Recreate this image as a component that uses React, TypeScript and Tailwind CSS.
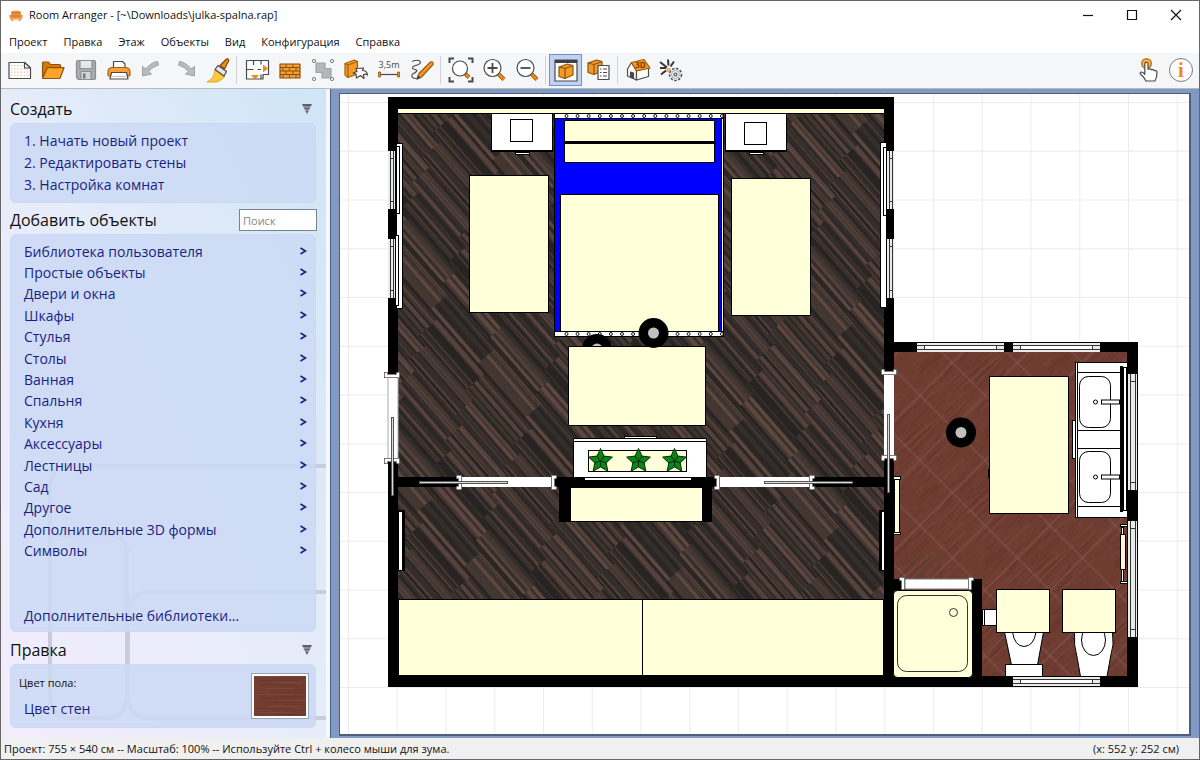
import type { ReactNode } from "react";

const MENU = ["Проект", "Правка", "Этаж", "Объекты", "Вид", "Конфигурация", "Справка"];

const STEPS = ["1. Начать новый проект", "2. Редактировать стены", "3. Настройка комнат"];

const CATEGORIES = [
  "Библиотека пользователя",
  "Простые объекты",
  "Двери и окна",
  "Шкафы",
  "Стулья",
  "Столы",
  "Ванная",
  "Спальня",
  "Кухня",
  "Аксессуары",
  "Лестницы",
  "Сад",
  "Другое",
  "Дополнительные 3D формы",
  "Символы",
];

const ORANGE = "#f08c14";
const INK = "#4a4a4a";
const CREAM = "#ffffd9";

/* ---------- toolbar icons ---------- */

function Icon({ children }: { children: ReactNode }) {
  return (
    <svg viewBox="0 0 26 26" className="size-[26px]" fill="none" stroke={INK} strokeWidth="1.2" strokeLinejoin="round" aria-hidden="true">
      {children}
    </svg>
  );
}

const dots = Array.from({ length: 24 }, (_, i) => ({ x: 4 + (i % 6) * 3.2, y: 8 + Math.floor(i / 6) * 3.3 }));

const NewIcon = (
  <Icon>
    <path d="M2 5.500h15.500l6 5.500v10.500H2z" fill="#fff" />
    {dots.map((d, i) => (
      <rect key={i} x={d.x} y={d.y} width="1.2" height="1.2" fill="#f3b487" stroke="none" />
    ))}
    <path d="M17.500 5.500v5.500h6z" fill="#fff" />
  </Icon>
);

const OpenIcon = (
  <Icon>
    <path d="M2.500 20V6q0-1 1-1h5l2 2.500h9q1 0 1 1V11" fill="#d87808" stroke="#8b5210" />
    <path d="M2.500 21.500 7 11.500q.3-.8 1.200-.8H24L20.300 20.500q-.4 1-1.400 1z" fill="#ffa32b" stroke="#8b5210" />
  </Icon>
);

const SaveIcon = (
  <Icon>
    <path d="M5 3.500h16q1.500 0 1.500 1.500v16q0 1.500-1.500 1.500H5.500L3.500 20.500V5q0-1.500 1.500-1.500z" fill="#a9abad" stroke="#8a8c8f" />
    <path d="M7 3.500h12v8H7z" fill="#e6e7e8" stroke="#8f9193" />
    <path d="M8 14.500h10v8H8z" fill="#d5d6d8" stroke="#8f9193" />
    <path d="M10 16.500h2.500v5H10z" fill="#77797c" stroke="none" />
  </Icon>
);

const PrintIcon = (
  <Icon>
    <path d="M7.500 12V4.500h9l2.500 2.500v5" fill="#fff" />
    <path d="M5.500 10.500h15q3.500 1 3.500 4.500v3q0 1-1 1H3q-1 0-1-1v-3q0-3.500 3.500-4.500z" fill="#f6a03a" stroke="#a85f0c" />
    <path d="M5.500 15.500h15l1.500 6.500H4z" fill="#fff" />
    <path d="M6.500 19.500h13" stroke="#c5c5c5" />
  </Icon>
);

const UndoIcon = (
  <Icon>
    <path d="M3.500 9.500V19l9-2-3-2.500q3.500-4.500 10-6.500l-1-3.500Q11.500 5.500 7 12z" fill="#b9bbbd" stroke="#9fa1a3" strokeWidth="1" />
  </Icon>
);

const RedoIcon = (
  <Icon>
    <path d="M22.500 9.500V19l-9-2 3-2.500q-3.500-4.500-10-6.500l1-3.500Q14.500 5.500 19 12z" fill="#b9bbbd" stroke="#9fa1a3" strokeWidth="1" />
  </Icon>
);

const BrushIcon = (
  <Icon>
    <path d="M2 25q7-3 8-12l10 6.500q-4 4-8 5.500z" fill="#ffc93c" stroke="#d99b16" strokeWidth=".8" />
    <path d="m10 12.500 3-4 8.500 6-2.500 4.500z" fill="#e4e6ea" />
    <path d="m15 8.500 5.500-5.500q2-2.200 3.200-.2.300 1.500-1.200 3.200L19.500 12z" fill={ORANGE} stroke="#7d4a10" />
  </Icon>
);

const PlanIcon = (
  <Icon>
    <path d="M2.500 3.500h22v14h-5.500v4.500H2.500z" fill="#fff" />
    <path d="M2.500 12.500h7m4 0h3.500m0-9v4m-7.500-4V8m7.500 9.500v4.500" />
    <path d="M7 18h8l-4 4.500z" fill={ORANGE} stroke="none" />
    <path d="M19 7.500v8l5-4z" fill={ORANGE} stroke="none" />
  </Icon>
);

const WallIcon = (
  <Icon>
    <rect x="3" y="7" width="20" height="14" fill="#f5a033" stroke="#8b4e0c" />
    <path d="M3 10.500h20M3 14h20M3 17.500h20M9 7v3.500M16 7v3.500M6 10.500V14M12.500 10.500V14M19 10.500V14M9 14v3.500M16 14v3.500M6 17.500V21M12.500 17.500V21M19 17.500V21" stroke="#8b4e0c" strokeWidth="1" />
  </Icon>
);

const GroupIcon = (
  <Icon>
    <path d="M6 6h9v5.500h6V21h-9v-5.500H6z" fill="#b5b7b9" stroke="#a0a2a4" />
    {[[4, 4], [22, 4], [4, 22], [22, 22]].map(([cx, cy]) => (
      <circle key={`${cx}-${cy}`} cx={cx} cy={cy} r="1.6" fill="#fff" stroke="#77797c" strokeWidth="1" />
    ))}
  </Icon>
);

const MoveIcon = (
  <Icon>
    <path d="M2 6.500 11.500 3l3 1.500V17L5 20.500 2 18z" fill="#f59a25" stroke="#a4600e" />
    <path d="M2 6.500 5 8l9.500-3.500M5 8v12.500" stroke="#a4600e" />
    <path d="m13 11.500 7.500-.5-1 2.500q4.500 0 5 4.500-2-1.500-4-.5l.5 4-3.500-3-4 2.500-.5-4-3-1 4-1.500z" fill="#fff" />
  </Icon>
);

const MeasureIcon = (
  <Icon>
    <text x="13" y="11" textAnchor="middle" fontSize="9" fill={INK} stroke="none" className="font-['Open_Sans',sans-serif]">
      3,5m
    </text>
    <path d="M4 17.500h19" />
    <path d="M2.500 15h2v5h-2zM21.500 15h2v5h-2z" fill={ORANGE} stroke="#8b5a1a" strokeWidth=".8" />
  </Icon>
);

const PencilIcon = (
  <Icon>
    <path d="M3 4.500q6-2.500 8 0T5 9q-3.500 2.500 1 3.500t-2.500 4.500q-2.500 4.500 4 4.500" />
    <path d="m8 22 2-5.500L21.500 5q3-.8 2.500 2.500L12.500 20z" fill="#f59a25" stroke="#9b5a0e" />
    <path d="m8 22 1.200-3 1.800 1.800z" fill={INK} />
  </Icon>
);

const FitIcon = (
  <Icon>
    <path d="M1.500 6V1.500H6M20 1.500h4.500V6M1.500 20v4.500H6M20 24.500h4.500V20" strokeWidth="2" strokeLinejoin="miter" />
    <circle cx="12" cy="11.500" r="7.500" fill="#fff" />
    <path d="m17.500 17 3.500 3.500" stroke="#9b5a0e" strokeWidth="4" />
    <path d="m18 17.500 3 3" stroke={ORANGE} strokeWidth="2.400" />
  </Icon>
);

function ZoomIcon({ plus }: { plus?: boolean }) {
  return (
    <Icon>
      <circle cx="11.500" cy="11" r="8.500" fill="#fff" />
      <path d={plus ? "M6.500 11h10M11.500 6v10" : "M6.500 11h10"} strokeWidth="1.800" />
      <path d="m17.500 17 5.500 5.500" stroke="#9b5a0e" strokeWidth="4" />
      <path d="m18 17.500 5 5" stroke={ORANGE} strokeWidth="2.400" />
    </Icon>
  );
}

const box = (
  <>
    <path d="m6 10 8.500-3 5.500 1.500v9.500L12 21.500 6 19.500z" fill="#f59a25" stroke="#8b5210" />
    <path d="m6 10 6 1.500 8-3M12 11.500v10" stroke="#8b5210" />
  </>
);

const ObjectWindowIcon = (
  <Icon>
    <rect x="2" y="3" width="22" height="21" fill="#fff" />
    <path d="M2 4.500h22" strokeWidth="3" stroke="#3c3f48" />
    {box}
  </Icon>
);

const ObjectListIcon = (
  <Icon>
    <g transform="translate(-4 -4)">{box}</g>
    <path d="M12 8.500h11v14H12z" fill="#fff" />
    <path d="M14 12h1.500m1.500 0h4M14 15.500h1.500m1.500 0h4M14 19h1.500m1.500 0h4" strokeWidth="1" />
  </Icon>
);

const HouseIcon = (
  <Icon>
    <path d="m2.500 12 4-6.500 5 8v9.500l-9-4z" fill="#fff" />
    <path d="m11.500 13.500 12-2.500v8.500l-12 3.500z" fill="#fff" />
    <path d="m6.500 5.500 12.500-3L25 11l-13.500 3z" fill="#f59a25" stroke="#9b5a0e" />
    <path d="M5.500 20v-5l3 1v5.300z" fill={INK} />
    <text x="15.500" y="11" textAnchor="middle" fontSize="8" fontWeight="bold" fill="#7c3a00" stroke="none" className="font-['Open_Sans',sans-serif]">
      3D
    </text>
  </Icon>
);

const RenderIcon = (
  <Icon>
    <path d="m2 5 7 5.500M10 2.500l.5 6M16 4.500l-3.500 5M2 11h6M3 17.500l5-4" stroke="#35363a" strokeWidth="2" />
    <circle cx="17.500" cy="17.500" r="6" strokeDasharray="2.500 1.500" strokeWidth="1.500" />
    <circle cx="17.500" cy="17.500" r="4" stroke="#8a8a8a" strokeWidth=".8" />
    <circle cx="17.500" cy="17.500" r="1.500" />
    <circle cx="10.500" cy="13" r="1.800" fill="#f3c084" stroke="#c98a3c" strokeWidth=".8" />
  </Icon>
);

const TouchIcon = (
  <Icon>
    <circle cx="11.500" cy="6.500" r="4.800" fill="#f9b14f" stroke="#c9781a" strokeWidth="1.500" />
    <path d="M9.800 15V6.800q0-1.500 1.600-1.500T13 6.800v5.400q2.800-1 3.300.6 2.500-.8 3 .9 2.700-.5 2.700 1.500-.1 5.500-2 8.800h-9q-1.500-3.500-5.500-7-1-1.800 1-2 1.800.2 3.300 2.500z" fill="#fff" />
  </Icon>
);

const InfoIcon = (
  <Icon>
    <circle cx="13" cy="13" r="11.500" fill="#fdfdfd" stroke="#7b7b7b" strokeWidth="1" />
    <text x="13" y="19.500" textAnchor="middle" fontSize="21" fontWeight="bold" fill={ORANGE} stroke="none" className="font-['Liberation_Serif',serif]">
      i
    </text>
  </Icon>
);

type Tool = { label: string; icon: ReactNode; active?: boolean };

const TOOL_GROUPS: Tool[][] = [
  [
    { label: "Новый", icon: NewIcon },
    { label: "Открыть", icon: OpenIcon },
    { label: "Сохранить", icon: SaveIcon },
    { label: "Печать", icon: PrintIcon },
    { label: "Отменить", icon: UndoIcon },
    { label: "Повторить", icon: RedoIcon },
    { label: "Кисть", icon: BrushIcon },
  ],
  [
    { label: "План", icon: PlanIcon },
    { label: "Стены", icon: WallIcon },
    { label: "Группа", icon: GroupIcon },
    { label: "Переместить", icon: MoveIcon },
    { label: "Размер", icon: MeasureIcon },
    { label: "Рисовать", icon: PencilIcon },
  ],
  [
    { label: "Показать всё", icon: FitIcon },
    { label: "Увеличить", icon: <ZoomIcon plus /> },
    { label: "Уменьшить", icon: <ZoomIcon /> },
  ],
  [
    { label: "Окно объекта", icon: ObjectWindowIcon, active: true },
    { label: "Список объектов", icon: ObjectListIcon },
  ],
  [
    { label: "Вид 3D", icon: HouseIcon },
    { label: "Рендер", icon: RenderIcon },
  ],
];

function ToolButton({ tool }: { tool: Tool }) {
  return (
    <button
      type="button"
      aria-label={tool.label}
      className={`flex h-8 w-[33px] items-center justify-center border ${tool.active ? "border-[#6f8fd0] bg-[#c3d1f0]" : "border-transparent"}`}
    >
      {tool.icon}
    </button>
  );
}

/* ---------- floor textures ---------- */

function makeRandom(seed: number) {
  let s = seed;
  return () => {
    s = (s * 1103515245 + 12345) % 2147483648;
    return s / 2147483648;
  };
}

const DARK_TONES = ["#2a2624", "#372e2b", "#443732", "#53403a", "#262322", "#40352f", "#5f4840", "#332d2b"];

const darkStrips = (() => {
  const rnd = makeRandom(7);
  const out: { x: number; y: number; w: number; h: number; fill: string }[] = [];
  // planks of 24 units, each with its own long grain lines
  for (let row = 0; row < 6; row++) {
    for (let col = 0; col < 2; col++) {
      const start = col * 72 + row * 12 - 60;
      for (let y = 0; y < 24; ) {
        const h = 1 + Math.floor(rnd() * 3);
        const fill = DARK_TONES[Math.floor(rnd() * DARK_TONES.length)];
        const w = 72;
        for (const shift of [0, 144]) out.push({ x: start + shift, y: row * 24 + y, w, h, fill });
        y += h;
      }
    }
  }
  return out;
})();

const redStrips = (() => {
  const rnd = makeRandom(23);
  return Array.from({ length: 110 }, () => ({
    x: Math.floor(rnd() * 92),
    y: Math.floor(rnd() * 92) - 10,
    h: 8 + Math.floor(rnd() * 30),
    fill: ["#633429", "#76463a", "#66382c", "#724035"][Math.floor(rnd() * 4)],
  }));
})();

function Textures() {
  return (
    <defs>
      <pattern id="dark" width="144" height="144" patternUnits="userSpaceOnUse" patternTransform="rotate(49)">
        <rect width="144" height="144" fill="#3f342f" />
        {darkStrips.map((s, i) => (
          <rect key={i} x={s.x} y={s.y} width={s.w} height={s.h} fill={s.fill} />
        ))}
      </pattern>
      <pattern id="red" width="92" height="92" patternUnits="userSpaceOnUse" patternTransform="rotate(45)">
        <rect width="92" height="92" fill="#6e3c30" />
        {redStrips.map((s, i) => (
          <rect key={i} x={s.x} y={s.y} width="1" height={s.h} fill={s.fill} />
        ))}
        <path d="M10 0v92M56 0v92M0 43h92M0 89h92" stroke="#a5857a" strokeWidth=".6" opacity=".6" />
      </pattern>
      <pattern id="grid" x="348" y="102" width="48.750" height="48.750" patternUnits="userSpaceOnUse">
        <path d="M.5 0v48.750M0 .5h48.750" stroke="#ececec" />
      </pattern>
    </defs>
  );
}

/* ---------- floor plan ---------- */

type BoxProps = { x: number; y: number; w: number; h: number; fill?: string; r?: number };

function Box({ x, y, w, h, fill = "#fff", r = 0 }: BoxProps) {
  return <rect x={x + 0.5} y={y + 0.5} width={w} height={h} rx={r} fill={fill} stroke="#000" strokeWidth="1" />;
}

function Wall({ x, y, w, h }: BoxProps) {
  return <rect x={x} y={y} width={w} height={h} fill="#000" />;
}

function WindowH({ x, y }: { x: number; y: number }) {
  return (
    <g stroke="#333" strokeWidth="1">
      <rect x={x} y={y} width="87" height="9" fill="#e9eaea" stroke="none" />
      <path d={`M${x} ${y + 2.5}h87M${x} ${y + 6.5}h87M${x + 7.5} ${y + 2}v5M${x + 79.5} ${y + 2}v5`} />
      <path d={`M${x + 8} ${y + 4.5}h71`} stroke="#fff" strokeWidth="3" />
    </g>
  );
}

function WindowV({ x, y, w, h }: BoxProps) {
  return (
    <g stroke="#333" strokeWidth="1">
      <rect x={x} y={y} width={w} height={h} fill="#e9eaea" stroke="none" />
      <path d={`M${x + 2.5} ${y}v${h}M${x + w - 1.5} ${y}v${h}M${x + 2} ${y + 7.5}h${w - 4}M${x + 2} ${y + h - 7.5}h${w - 4}`} />
    </g>
  );
}

// Jamb of a sliding door
function Jamb({ d }: { d: string }) {
  return (
    <>
      <path d={d} fill="none" stroke="#555" strokeWidth="4" strokeLinecap="square" />
      <path d={d} fill="none" stroke="#fff" strokeWidth="2.400" strokeLinecap="square" />
    </>
  );
}

function Slider({ x, y, w, h }: BoxProps) {
  return <rect x={x + 0.5} y={y + 0.5} width={w} height={h} fill="#ddd" stroke="#555" />;
}

function Stool({ x, y }: { x: number; y: number }) {
  return (
    <>
      <circle cx={x} cy={y} r="15" fill="#000" />
      <circle cx={x} cy={y} r="5.500" fill="#c0c0c0" />
    </>
  );
}

function Nightstand({ x, top }: { x: number; top: number }) {
  return (
    <>
      <Box x={x} y={113} w={61} h={38} />
      <path d={`M${x} 150.500h61`} stroke="#000" />
      <Box x={x + 24} y={152} w={14} h={2} />
      <Box x={x + 19} y={top} w={22} h={22} />
    </>
  );
}

function starPoints(cx: number, cy: number) {
  return Array.from({ length: 10 }, (_, i) => {
    const r = i % 2 ? 6 : 12.5;
    const a = (Math.PI / 5) * i - Math.PI / 2;
    return `${(cx + r * Math.cos(a)).toFixed(1)},${(cy + r * Math.sin(a)).toFixed(1)}`;
  });
}

function Plant({ x }: { x: number }) {
  const pts = starPoints(x, 461);
  return (
    <g stroke="#052b08" strokeWidth="1">
      <polygon points={pts.join(" ")} fill="#0a8616" />
      {pts.filter((_, i) => i % 2 === 1).map((p) => (
        <path key={p} d={`M${x} 461L${p}`} />
      ))}
    </g>
  );
}

function Rail({ y }: { y: number }) {
  return (
    <>
      <Box x={554} y={y} w={169} h={5} />
      {Array.from({ length: 15 }, (_, i) => (
        <circle key={i} cx={566.5 + i * 11.1} cy={y + 3} r="1.500" fill="#fff" stroke="#000" strokeWidth=".9" />
      ))}
    </>
  );
}

function Basin({ y }: { y: number }) {
  return (
    <>
      <rect x="1079.500" y={y} width="31" height="51" rx="9" fill="#fff" stroke="#000" />
      <circle cx="1095.500" cy={y + 25.5} r="2" fill="#fff" stroke="#000" />
      <Box x={1101} y={y + 23} w={18} h={4} />
    </>
  );
}

function Bedroom() {
  return (
    <>
      <Wall x={388} y={97} w={506} h={590} />
      <rect x="398" y="113" width="486" height="486" fill="url(#dark)" />
      <rect x="398" y="109" width="486" height="4" fill={CREAM} />
      <path d="M398 113.500h486" stroke="#000" />
      <Box x={398} y={599} w={485} h={76} fill={CREAM} />
      <path d="M642.500 599v77" stroke="#000" />
      <Wall x={398} y={477} w={486} h={10} />

      {/* windows and curtains */}
      <WindowV x={388} y={151} w={7} h={58} />
      <WindowV x={388} y={239} w={7} h={59} />
      <Box x={396} y={143} w={6} h={165} />
      <Box x={396} y={146} w={3} h={67} />
      <Box x={395} y={235} w={3} h={70} />
      <WindowV x={887} y={151} w={7} h={58} />
      <WindowV x={887} y={239} w={7} h={59} />
      <Box x={880} y={142} w={6} h={165} />
      <Box x={883} y={147} w={3} h={68} />
      <Wall x={397} y={510} w={8} h={61} />
      <rect x="399" y="512" width="3" height="58" fill="#fff" />
      <Wall x={879} y={510} w={8} h={61} />
      <rect x="882" y="512" width="3" height="58" fill="#fff" />

      {/* bed */}
      <Box x={554} y={113} w={169} h={222} />
      <rect x="555" y="118" width="167" height="214" fill="#00f" />
      <path d="M721.500 118v214" stroke="#000" />
      <Rail y={113} />
      <Rail y={331} />
      <Box x={564} y={120} w={150} h={42} fill={CREAM} />
      <path d="M564 142.500h152" stroke="#000" strokeWidth="3" />
      <Box x={560} y={194} w={158} h={137} fill={CREAM} />

      <Nightstand x={491} top={119} />
      <Nightstand x={725} top={122} />
      <Box x={469} y={175} w={79} h={137} fill={CREAM} />
      <Box x={731} y={178} w={79} h={137} fill={CREAM} />

      <Stool x={597} y={349} />
      <Box x={568} y={346} w={137} h={79} fill={CREAM} />
      <Stool x={653.5} y={333} />

      {/* cabinet with plants */}
      <Box x={624} y={436} w={32} h={2} />
      <Box x={573} y={438} w={133} h={39} />
      <path d="M573 441.500h133" stroke="#000" />
      <Box x={588} y={450} w={98} h={21} fill={CREAM} />
      <Plant x={600.5} />
      <Plant x={638.5} />
      <Plant x={674.5} />
      <Wall x={554} y={477} w={160} h={10} />
      <rect x="585" y="478" width="106" height="2" fill="#fff" />
      <Box x={570} y={487} w={132} h={34} fill={CREAM} />
      <Wall x={559} y={487} w={11} h={35} />
      <Wall x={702} y={487} w={10} h={35} />

      {/* sliding doors */}
      <rect x="462" y="477" width="90" height="10" fill="#fff" />
      <Jamb d="M458 477h2v11h-2" />
      <Jamb d="M555 477h-2v11h2" />
      <Slider x={419} y={481} w={88} h={2} />
      <rect x="720" y="477" width="90" height="10" fill="#fff" />
      <Jamb d="M716 477h2v11h-2" />
      <Jamb d="M813 477h-2v11h2" />
      <Slider x={764} y={481} w={88} h={2} />
      <rect x="388" y="376" width="10" height="84" fill="#fff" stroke="#aaa" />
      <Jamb d="M386 374v2h12v-2" />
      <Jamb d="M386 462v-2h12v2" />
      <Slider x={391} y={417} w={2} h={78} />
    </>
  );
}

function Bathroom() {
  return (
    <>
      <Wall x={884} y={342} w={254} h={345} />
      <rect x="894" y="352" width="233" height="324" fill="url(#red)" />
      <WindowH x={917} y={343} />
      <WindowH x={1013} y={343} />
      <WindowH x={1013} y={677} />
      <WindowV x={1128} y={374} w={9} h={116} />
      <WindowV x={1128} y={521} w={9} h={116} />

      <rect x="884" y="373" width="10" height="83" fill="#fff" />
      <Jamb d="M883 371v2h12v-2" />
      <Jamb d="M883 459v-2h12v2" />
      <Slider x={887} y={414} w={2} h={78} />

      <Box x={989} y={376} w={79} h={137} fill={CREAM} />
      <Wall x={988} y={469} w={2} h={9} />
      <Stool x={961} y={432.5} />

      {/* vanity */}
      <Box x={1072} y={420} w={3} h={38} />
      <Box x={1075} y={362} w={52} h={155} />
      <path d="M1077.500 363v154M1078 372.500h44M1078 430.500h44M1078 448.500h44M1078 506.500h44" stroke="#000" />
      <Basin y={376.5} />
      <Basin y={451.5} />
      <Box x={1123} y={367} w={3} h={143} />
      <Wall x={1120} y={366} w={3} h={146} />

      {/* towel rail and radiator */}
      <Box x={894} y={478} w={5} h={56} fill={CREAM} />
      <Box x={893} y={476} w={7} h={3} fill={CREAM} />
      <Box x={893} y={532} w={7} h={2} fill={CREAM} />
      <Box x={1120} y={524} w={7} h={2} fill={CREAM} />
      <Box x={1121} y={527} w={2} h={54} fill="#fff" />
      <Box x={1120} y={534} w={5} h={35} fill="#fff5d5" />
      <Box x={1120} y={581} w={7} h={2} fill="#fff" />

      {/* shower */}
      <path d="M906 578l7-24 7 24m2 0l7-24 7 24" fill="none" stroke="#5a4440" />
      <Wall x={894} y={579} w={12} h={12} />
      <Wall x={970} y={579} w={12} h={100} />
      <rect x="905" y="579" width="64" height="10" fill="#fff" stroke="#777" />
      <Jamb d="M901 579h2v9" />
      <Jamb d="M972 579h-2v9" />
      <Box x={893} y={590} w={79} h={87} fill={CREAM} r={4} />
      <rect x="897.500" y="595.500" width="70" height="76" rx="9" fill={CREAM} stroke="#333" />
      <circle cx="953.500" cy="612.500" r="4" fill={CREAM} stroke="#333" />

      {/* toilets */}
      <Box x={982} y={609} w={14} h={16} />
      <path d="M984.500 609v17" stroke="#000" />
      <path d="M1004.500 632l7 33h26l6-33z" fill="#fff" stroke="#000" />
      <path d="M1012.500 632q2 14 11.500 14.500 10-.5 12-14.500" fill="#fff" stroke="#000" />
      <Box x={1005} y={664} w={37} h={12} />
      <path d="M1074.500 632q-1 13 2.500 25l3.500 19.500h26.500l3.500-19.500q4-12 2-25z" fill="#fff" stroke="#000" />
      <ellipse cx="1093.500" cy="640" rx="12" ry="15.500" fill="#fff" stroke="#000" />
      <Box x={996} y={589} w={53} h={43} fill={CREAM} />
      <Box x={1062} y={589} w={53} h={43} fill={CREAM} />
    </>
  );
}

function FloorPlan() {
  return (
    <svg className="block h-full w-full" role="img" aria-label="План этажа">
      <Textures />
      <g transform="translate(-340 -94)">
        <rect x="340" y="94" width="4000" height="4000" fill="#fff" />
        <rect x="340" y="94" width="4000" height="4000" fill="url(#grid)" />
        <Bedroom />
        <Bathroom />
      </g>
    </svg>
  );
}

/* ---------- sidebar ---------- */

function Heading({ children }: { children: ReactNode }) {
  return <h2 className="text-base leading-6 text-[#111]">{children}</h2>;
}

function Collapse({ label }: { label: string }) {
  return (
    <button type="button" aria-label={label} className="mr-1">
      <svg viewBox="0 0 10 10" className="size-[10px]" aria-hidden="true">
        <path d="M0 0h10L5 10z" fill="#5b5f66" />
        <path d="M1 3h8M2 6h6" stroke="#b9c6d6" strokeWidth="1" />
      </svg>
    </button>
  );
}

function Sidebar() {
  return (
    <aside className="relative flex w-[329px] shrink-0 flex-col border-r-4 border-[#f5f8fc] bg-linear-to-tr from-[#f3ecfd] via-[#e6ecfa] to-[#cfe5f5] pr-[10px] pb-[10px] pl-[9px] text-sm text-[#1a1f82]">
      <svg className="pointer-events-none absolute inset-0 h-full w-full" fill="none" stroke="#c9ccdc" strokeWidth="4" aria-hidden="true">
        <g transform="translate(-1 -89)">
          <path d="M330 466H70q-20 0-20 22v205q0 25 20 25h37q20 0 20-25V555q0-20-17-20H50" />
          <path d="M330 592H148q-20 0-20 22v80q0 24 20 24h182" />
        </g>
      </svg>

      <div className="relative mt-2 flex items-center justify-between">
        <Heading>Создать</Heading>
        <Collapse label="Свернуть «Создать»" />
      </div>
      <ul className="relative mt-[2px] rounded-md border border-[#c9d9f4] bg-[#cbd9f5]/85 py-[6px] pl-[13px]">
        {STEPS.map((s) => (
          <li key={s} className="leading-[22px]">
            <a href="#">{s}</a>
          </li>
        ))}
      </ul>

      <div className="relative mt-[5px] flex items-center justify-between">
        <Heading>Добавить объекты</Heading>
        <input
          type="search"
          aria-label="Поиск"
          placeholder="Поиск"
          className="-mr-px h-[22px] w-[78px] border border-[#7a828c] bg-white px-[3px] text-[11px] text-black placeholder:text-[#858585]"
        />
      </div>
      <div className="relative mt-[2px] flex flex-1 flex-col justify-between rounded-md border border-[#c9d9f4] bg-[#cbd9f5]/85 pt-[6px] pb-1 pl-[13px]">
        <ul className="grid h-[321px] auto-rows-fr">
          {CATEGORIES.map((c) => (
            <li key={c} className="flex">
              <button type="button" className="flex flex-1 items-center justify-between pr-2 leading-5">
                <span>{c}</span>
                <svg viewBox="0 0 8 8" className="mb-[2px] size-2" fill="none" stroke="#1a1f82" strokeWidth="1.600" aria-hidden="true">
                  <path d="M1.500 1 6.500 4 1.500 7" />
                </svg>
              </button>
            </li>
          ))}
        </ul>
        <a href="#" className="leading-[22px]">
          Дополнительные библиотеки...
        </a>
      </div>

      <div className="relative mt-[6px] flex items-center justify-between">
        <Heading>Правка</Heading>
        <Collapse label="Свернуть «Правка»" />
      </div>
      <div className="relative mt-[2px] flex items-center justify-between rounded-md border border-[#c9d9f4] bg-[#cbd9f5]/85 py-[7px] pr-[6px]">
        <div className="flex flex-col gap-1">
          <span className="pl-2 text-[11px] leading-[22px] text-[#111]">Цвет пола:</span>
          <a href="#" className="pl-[13px] leading-[22px]">
            Цвет стен
          </a>
        </div>
        <button type="button" aria-label="Цвет пола" className="h-[46px] w-[58px] border border-[#9aa3b3] bg-white p-[2px]">
          <svg className="block h-full w-full" aria-hidden="true">
            <rect width="100%" height="100%" fill="#733e31" />
            {Array.from({ length: 20 }, (_, i) => (
              <rect key={i} y={i * 2} x={(i * 17) % 30} width={26 + ((i * 7) % 20)} height="1" fill={i % 3 ? "#69382c" : "#7c4738"} />
            ))}
          </svg>
        </button>
      </div>
    </aside>
  );
}

export default function App() {
  return (
    <div className="flex h-screen flex-col overflow-hidden border border-[#666] bg-white font-['Open_Sans','Noto_Sans',sans-serif] text-[11px] text-[#111]">
      <header className="flex h-7 shrink-0 items-center justify-between pr-px">
        <div className="flex items-center gap-[6px] pl-2">
          <svg viewBox="0 0 14 11" className="h-[11px] w-[14px]" aria-hidden="true">
            <path d="M2 1.500Q7-.5 12 1.500V5h2l-1 4.500H1L0 5h2z" fill="#f39a4a" />
            <path d="M3 3h8M2 6h10M2.500 10.300h2m5 0h2" stroke="#c8671a" />
          </svg>
          <h1>Room Arranger - [~\Downloads\julka-spalna.rap]</h1>
        </div>
        <div className="flex">
          {[
            ["Свернуть", "M1 6.500h10"],
            ["Развернуть", "M1.500 1.500h9v9h-9z"],
            ["Закрыть", "M1 1l10 10M11 1 1 11"],
          ].map(([label, d]) => (
            <button key={label} type="button" aria-label={label} className="flex h-7 w-11 items-center justify-center">
              <svg viewBox="0 0 12 12" className="size-3" fill="none" stroke="#111" strokeWidth="1.200" aria-hidden="true">
                <path d={d} />
              </svg>
            </button>
          ))}
        </div>
      </header>

      <nav className="flex h-6 shrink-0 items-center gap-4 pt-[2px] pl-2">
        {MENU.map((m) => (
          <button key={m} type="button">
            {m}
          </button>
        ))}
      </nav>

      <div className="flex h-[35px] shrink-0 items-center justify-between bg-[#f4f6f8] pr-[2px] pb-px pl-[2px]">
        <div className="flex items-center">
          {TOOL_GROUPS.map((group, i) => (
            <div key={i} className="flex items-center">
              {i > 0 && <div className="mr-[3px] ml-[2px] h-7 w-px bg-[#cfd2d6]" />}
              {group.map((t) => (
                <ToolButton key={t.label} tool={t} />
              ))}
            </div>
          ))}
        </div>
        <div className="flex">
          <ToolButton tool={{ label: "Касание", icon: TouchIcon }} />
          <ToolButton tool={{ label: "О программе", icon: InfoIcon }} />
        </div>
      </div>

      <div className="flex min-h-0 flex-1 border-t border-[#b4bac4]">
        <Sidebar />
        <main className="min-w-0 flex-1 border-l border-[#4a5f8c] bg-[#8299c4] pt-1 pr-2 pb-[2px] pl-2">
          <div className="h-full overflow-hidden border-t border-r-2 border-b-2 border-l border-[#4c5d80]">
            <FloorPlan />
          </div>
        </main>
      </div>

      <footer className="flex h-[21px] shrink-0 items-center justify-between bg-[#f0f0f0] pt-[2px] pr-5 pl-[3px]">
        <span>Проект: 755 × 540 см -- Масштаб: 100% -- Используйте Ctrl + колесо мыши для зума.</span>
        <span>(x: 552 y: 252 см)</span>
      </footer>
    </div>
  );
}
